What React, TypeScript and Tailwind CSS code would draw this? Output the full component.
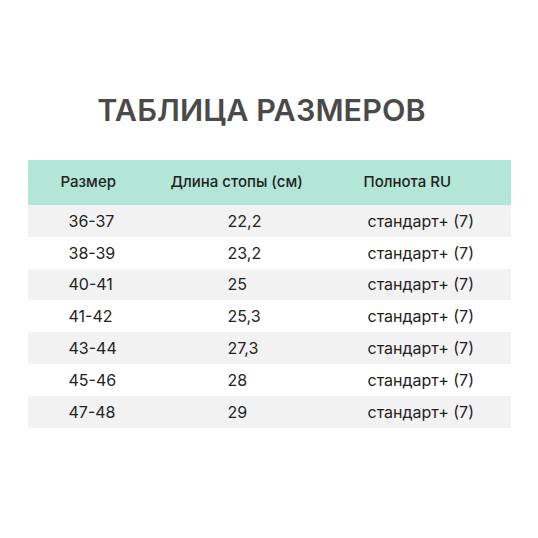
const ROWS = [
  { size: "36-37", length: "22,2", width: "стандарт+ (7)" },
  { size: "38-39", length: "23,2", width: "стандарт+ (7)" },
  { size: "40-41", length: "25", width: "стандарт+ (7)" },
  { size: "41-42", length: "25,3", width: "стандарт+ (7)" },
  { size: "43-44", length: "27,3", width: "стандарт+ (7)" },
  { size: "45-46", length: "28", width: "стандарт+ (7)" },
  { size: "47-48", length: "29", width: "стандарт+ (7)" },
];

export default function App() {
  return (
    <div
      className="w-[538px] h-[538px] bg-white flex flex-col items-center"
      style={{ fontFamily: "Inter, 'Noto Sans', sans-serif" }}
    >
      <h1 className="mt-[92px] mr-[15px] text-[30.5px] leading-[36px] font-semibold text-[#4a4a4a] tracking-[0.1px]">
        ТАБЛИЦА РАЗМЕРОВ
      </h1>

      <div className="mt-[32px] w-[483px] text-[#222]">
        <div className="h-[45px] bg-[#b3e6d6] flex items-center text-[15px] font-medium">
          <div className="w-[143px] pl-[33px]">Размер</div>
          <div className="w-[193px]">Длина стопы (см)</div>
          <div>Полнота RU</div>
        </div>
        {ROWS.map((row, i) => (
          <div
            key={row.size}
            className={`h-[31.8px] grid grid-cols-[200px_140px_1fr] items-center text-[16px] ${
              i % 2 === 0 ? "bg-[#f2f2f2]" : "bg-white"
            }`}
          >
            <div className="pl-[41px]">{row.size}</div>
            <div>{row.length}</div>
            <div>{row.width}</div>
          </div>
        ))}
      </div>
    </div>
  );
}
